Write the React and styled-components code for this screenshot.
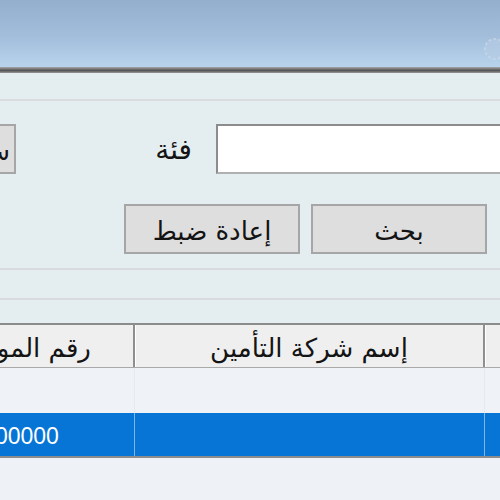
import React from 'react';
import styled, { createGlobalStyle } from 'styled-components';

const Global = createGlobalStyle`
  html, body {
    margin: 0;
    padding: 0;
    background: #eef2f7;
    overflow: hidden;
  }
  body {
    font-family: "DejaVu Sans", "Noto Sans", sans-serif;
  }
`;

const Window = styled.div`
  width: 500px;
  height: 500px;
  overflow: hidden;
  display: flex;
  flex-direction: column;
`;

const TitleBar = styled.div`
  height: 67px;
  flex: 0 0 67px;
  background: linear-gradient(to bottom, #93afce 0%, #a3bedb 55%, #b8d4ec 100%);
  display: flex;
  justify-content: flex-end;
  align-items: center;
  padding-top: 30px;
  box-sizing: border-box;
`;

const TitleEdge = styled.div`
  height: 6px;
  flex: 0 0 6px;
  background: linear-gradient(to bottom, #a9a9a9 0%, #6c6c6c 40%, #555 60%, #9a9a9a 100%);
`;

const Strip = styled.div`
  height: ${p => p.$h}px;
  flex: 0 0 ${p => p.$h}px;
  background: #e4eef0;
  border-bottom: 2px solid #d9dbdf;
`;

const Panel = styled.div`
  background: #e4eef0;
  border-bottom: 2px solid #d9dbdf;
  padding: 23px 0 14px;
  display: flex;
  flex-direction: column;
  gap: 30px;
`;

const Row = styled.div`
  display: flex;
  align-items: center;
  height: 50px;
  justify-content: ${p => p.$end ? 'flex-end' : 'flex-start'};
  gap: ${p => p.$gap || 0}px;
  padding-right: ${p => p.$pr || 0}px;
`;

const Button = styled.button`
  box-sizing: border-box;
  height: 50px;
  width: ${p => p.$w || 176}px;
  margin-left: ${p => p.$ml || 0}px;
  background: #dedede;
  border: 2px solid #a6a6a6;
  border-radius: 0;
  font-family: "DejaVu Sans", sans-serif;
  font-size: 26px;
  line-height: 1;
  color: #141414;
  direction: rtl;
  text-align: ${p => p.$align || 'center'};
  padding: 3px ${p => p.$pad || 0}px 0;
  flex: 0 0 auto;
  overflow: hidden;
  white-space: nowrap;
`;

const Label = styled.span`
  margin-left: auto;
  margin-right: 24px;
  font-size: 28px;
  line-height: 1;
  color: #141414;
  direction: rtl;
  padding-top: 1px;
`;

const Input = styled.input`
  box-sizing: border-box;
  width: 300px;
  height: 50px;
  margin-right: -16px;
  flex: 0 0 auto;
  background: #fff;
  border: 2px solid #8c8c8c;
  border-right-color: #c8c8c8;
  border-bottom-color: #b0b0b0;
  outline: none;
`;

const Gap = styled.div`
  height: 23px;
  flex: 0 0 23px;
  background: #e4eef0;
`;

const Table = styled.div`
  margin-left: -93px;
  width: 700px;
  border-top: 2px solid #8c8c8c;
  border-bottom: 2px solid #8c8c8c;
  background: #eff3f8;
`;

const TRow = styled.div`
  display: grid;
  grid-template-columns: 228px 350px 1fr;
  height: ${p => p.$h}px;
  background: ${p => p.$bg || 'transparent'};
  border-bottom: ${p => p.$head ? '1px solid #a9a9a9' : 'none'};
`;

const Cell = styled.div`
  display: flex;
  align-items: center;
  justify-content: center;
  direction: rtl;
  font-size: 26px;
  line-height: 1;
  color: ${p => p.$sel ? '#fff' : '#141414'};
  padding-top: 3px;
  box-sizing: border-box;
  border-right: ${p => p.$last ? 'none' : p.$head ? '2px solid #8f8f8f' : p.$sel ? '1px solid #7fb6e8' : '1px solid #e6eaef'};
  box-shadow: ${p => p.$head ? 'inset 1px 0 0 #fff' : 'none'};
  white-space: nowrap;
  overflow: hidden;
`;

const Num = styled.span`
  direction: ltr;
  font-family: "Liberation Sans", Arial, sans-serif;
  font-size: 23px;
`;

const Badge = styled.svg`
  margin-right: -8px;
  flex: 0 0 auto;
  opacity: 0.6;
`;

export default function App() {
  return (
    <>
      <Global />
      <Window>
        <TitleBar>
          <Badge width="26" height="26" viewBox="0 0 26 26">
            <circle cx="13" cy="13" r="10" fill="#b7cce4" stroke="#cfdcec" strokeWidth="2" strokeDasharray="3 2" />
            <rect x="21" y="10" width="5" height="7" fill="#a9c46a" />
          </Badge>
        </TitleBar>
        <TitleEdge />
        <Strip $h={26} />
        <Panel>
          <Row>
            <Button $w={70} $ml={-54} $align="right" $pad={4}>سجل</Button>
            <Label>فئة</Label>
            <Input />
          </Row>
          <Row $end $gap={11} $pr={13}>
            <Button>إعادة ضبط</Button>
            <Button>بحث</Button>
          </Row>
        </Panel>
        <Strip $h={28} />
        <Gap />
        <Table>
          <TRow $h={42} $head style={{ background: '#efefef' }}>
            <Cell $head>رقم الموظف</Cell>
            <Cell $head>إسم شركة التأمين</Cell>
            <Cell $head $last>الحالة</Cell>
          </TRow>
          <TRow $h={45}>
            <Cell />
            <Cell />
            <Cell $last />
          </TRow>
          <TRow $h={43} $bg="#0675d6">
            <Cell $sel><Num>100000</Num></Cell>
            <Cell $sel />
            <Cell $sel $last />
          </TRow>
        </Table>
      </Window>
    </>
  );
}
